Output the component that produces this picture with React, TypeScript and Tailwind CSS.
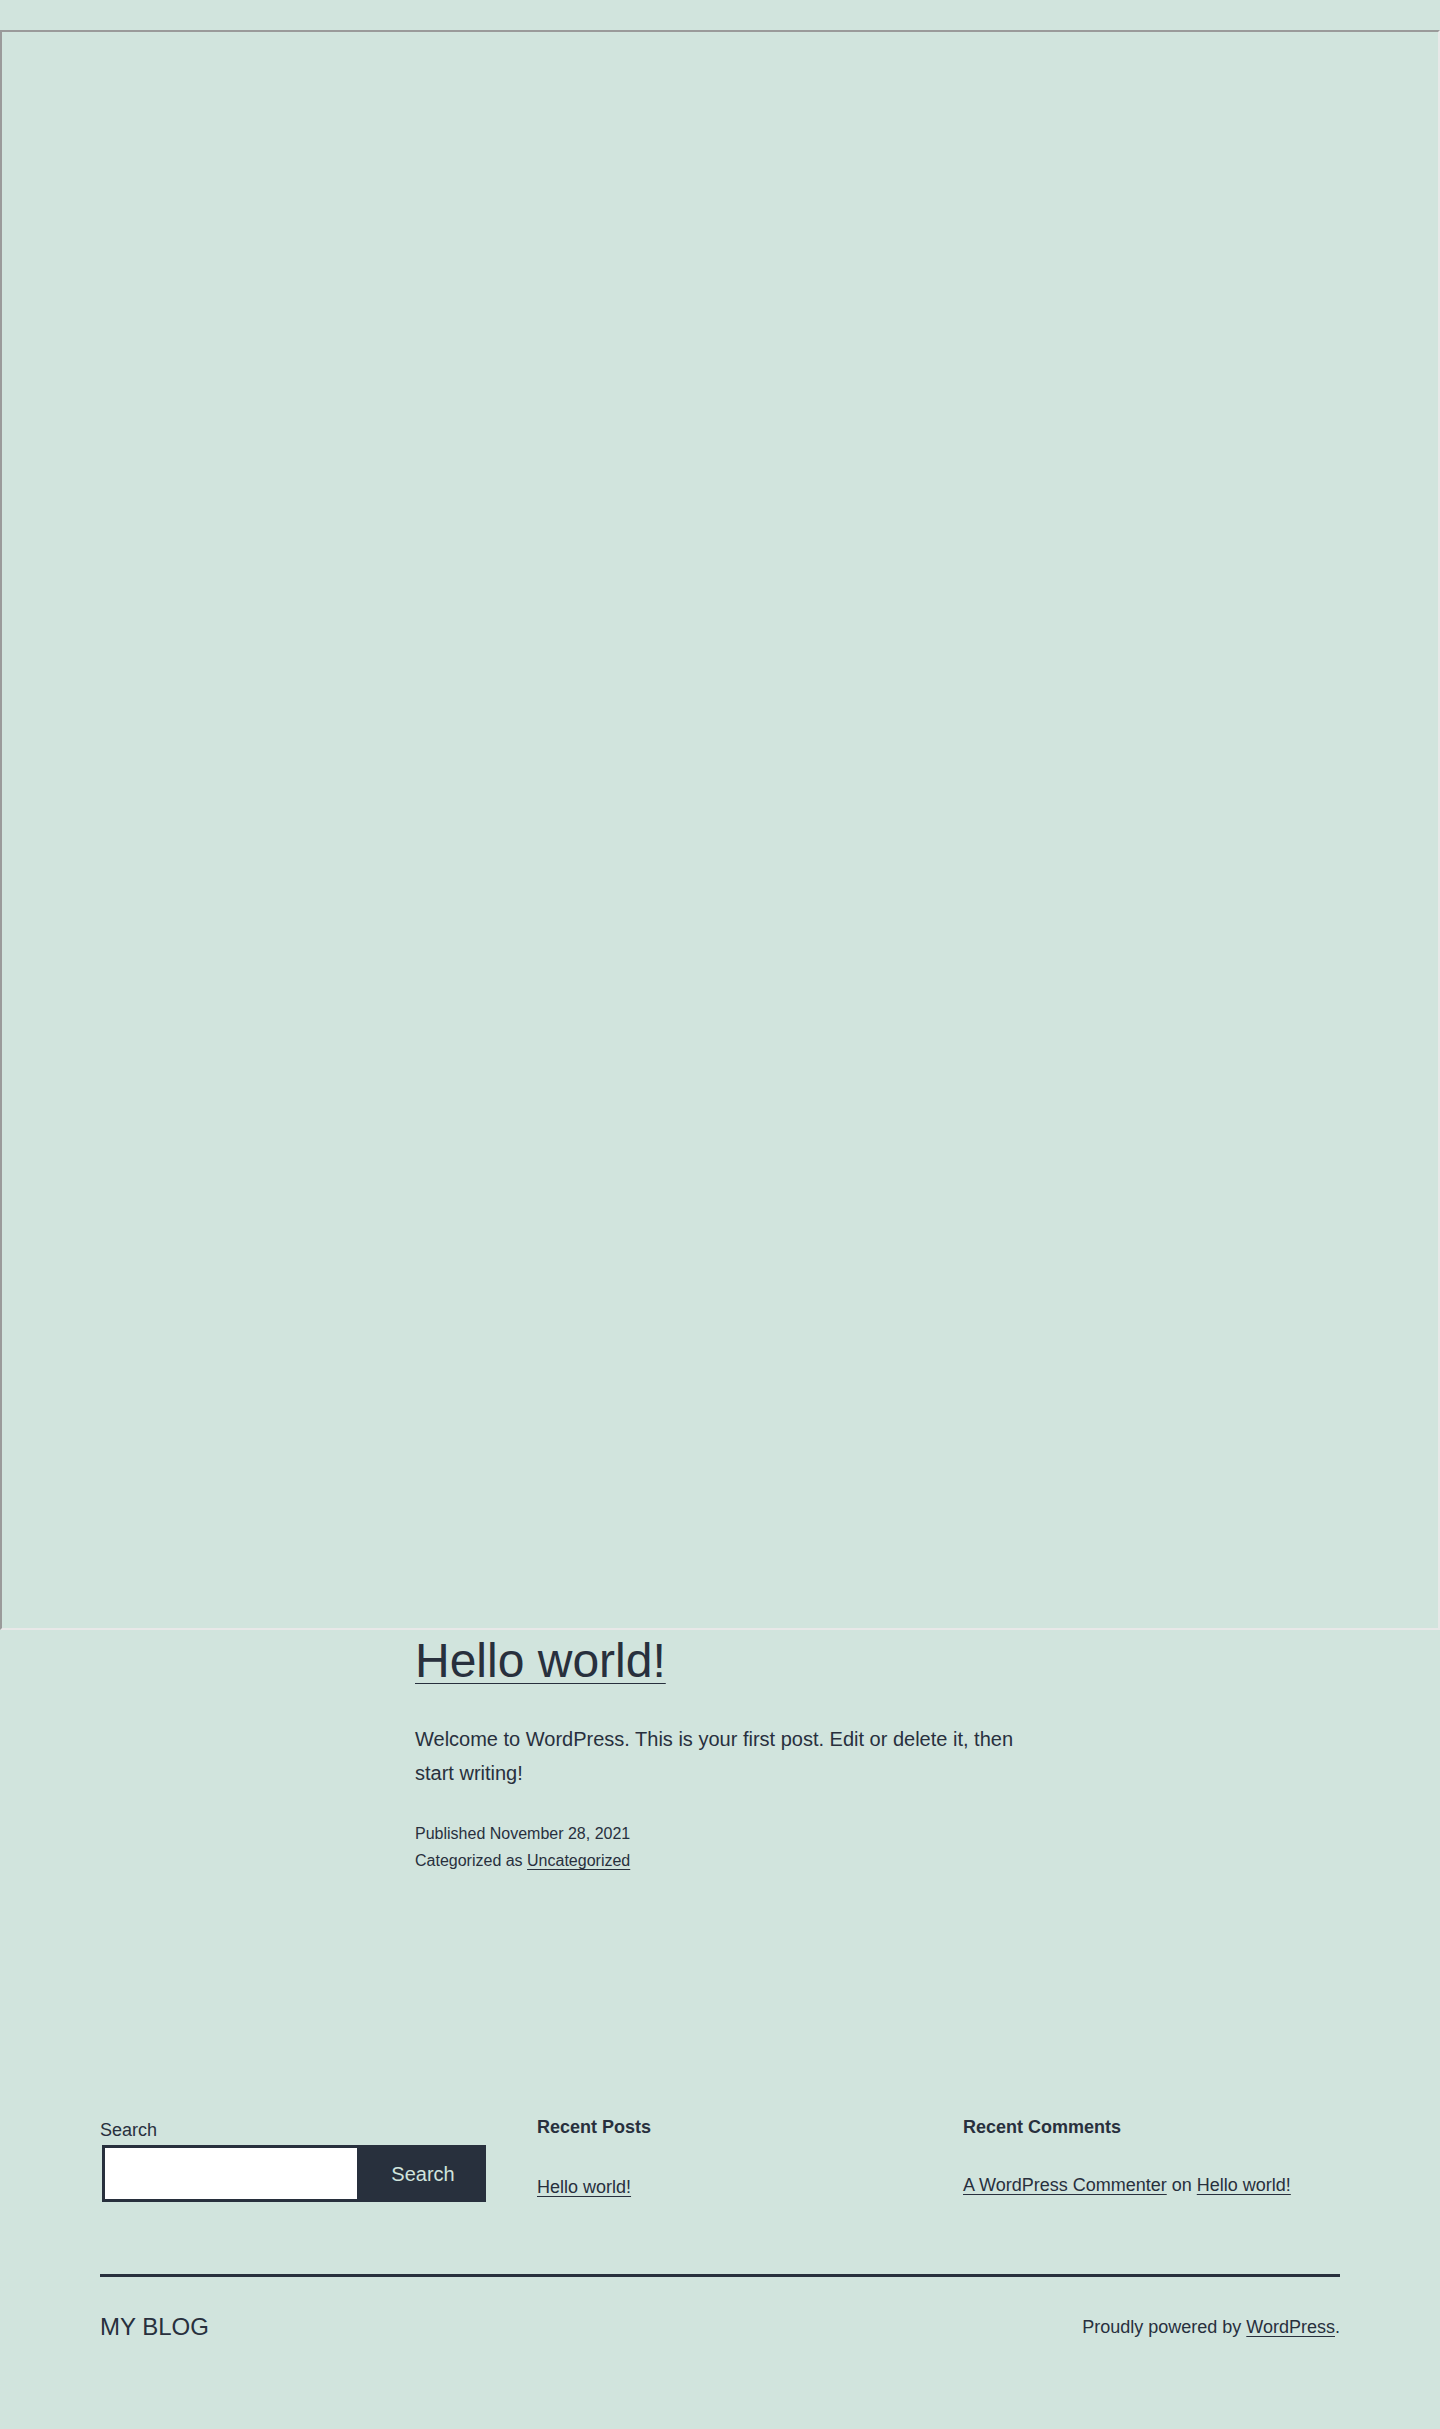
import React from 'react';

const linkCls = 'underline decoration-1 underline-offset-[3px]';

const App: React.FC = () => {
    return (
        <div className="min-h-screen bg-[#d1e4dd] text-[#28303d] font-['Liberation_Sans',Arial,sans-serif]">
            {/* embedded frame */}
            <div className="pt-[30px]">
                <div className="h-[1600px] border-2 border-t-[#9a9a9a] border-l-[#9a9a9a] border-r-[#e8e8e8] border-b-[#e8e8e8]" />
            </div>

            <main className="mx-auto w-[610px]">
                <h2 className="text-[48px] leading-[62px] font-normal">
                    <a href="#" className="underline decoration-1 underline-offset-[6px]">Hello world!</a>
                </h2>
                <p className="mt-[30px] text-[20px] leading-[34px]">
                    Welcome to WordPress. This is your first post. Edit or delete it, then start writing!
                </p>
                <div className="mt-[30px] text-[16px] leading-[27px]">
                    <div>Published November 28, 2021</div>
                    <div>
                        Categorized as <a href="#" className={linkCls}>Uncategorized</a>
                    </div>
                </div>
            </main>

            <footer className="mx-auto w-[1240px] mt-[241px] pb-[87px]">
                <div className="grid grid-cols-[437px_426px_1fr] items-start">
                    <div className="pt-[2px]">
                        <label className="block text-[18px] leading-[26px]">Search</label>
                        <div className="mt-[2px] ml-[2px] flex h-[57px]">
                            <input
                                type="text"
                                className="w-[258px] h-full border-[3px] border-[#28303d] bg-white outline-none"
                            />
                            <button className="w-[126px] h-full bg-[#28303d] text-[#d1e4dd] text-[20px]">
                                Search
                            </button>
                        </div>
                    </div>
                    <div>
                        <h2 className="text-[18px] leading-[25px] font-bold">Recent Posts</h2>
                        <ul className="mt-[34px] text-[18px] leading-[27px]">
                            <li>
                                <a href="#" className={linkCls}>Hello world!</a>
                            </li>
                        </ul>
                    </div>
                    <div>
                        <h2 className="text-[18px] leading-[25px] font-bold">Recent Comments</h2>
                        <ul className="mt-[32px] text-[18px] leading-[27px]">
                            <li>
                                <a href="#" className={linkCls}>A WordPress Commenter</a> on{' '}
                                <a href="#" className={linkCls}>Hello world!</a>
                            </li>
                        </ul>
                    </div>
                </div>

                <div className="mt-[72px] border-t-[3px] border-[#28303d] pt-[34px] flex items-center justify-between">
                    <div className="text-[24px] leading-[31px] uppercase">My Blog</div>
                    <div className="mt-[2px] text-[18px] leading-[27px]">
                        Proudly powered by <a href="#" className={linkCls}>WordPress</a>.
                    </div>
                </div>
            </footer>
        </div>
    );
};

export default App;
